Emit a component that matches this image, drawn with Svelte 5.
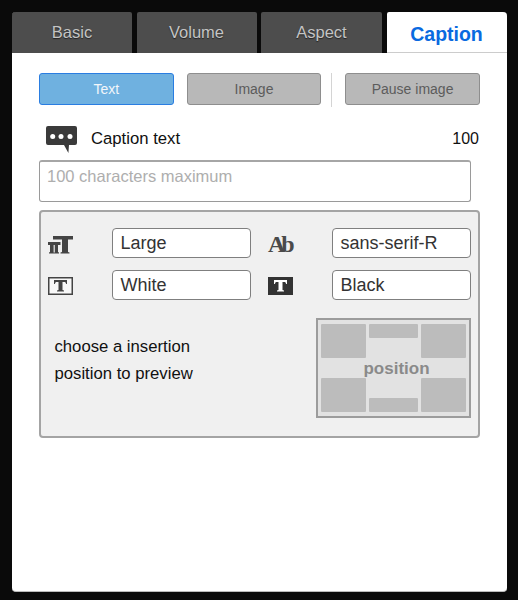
<script lang="ts">
	let tabs = ['Basic', 'Volume', 'Aspect', 'Caption'];
	let active = $state('Caption');
	let mode = $state('Text');
	let caption = $state('');
	let remaining = $derived(100 - caption.length);
</script>

<div class="panel">
	<div class="tabs">
		{#each tabs as tab}
			<button type="button" class="tab" class:active={active === tab} onclick={() => (active = tab)}>{tab}</button>
		{/each}
	</div>

	<div class="content">
		<div class="modes">
			<button type="button" class="mode" class:on={mode === 'Text'} onclick={() => (mode = 'Text')}>Text</button>
			<button type="button" class="mode" class:on={mode === 'Image'} onclick={() => (mode = 'Image')}>Image</button>
			<span class="divider"></span>
			<button type="button" class="mode pause">Pause image</button>
		</div>

		<div class="caption-row">
			<svg class="bubble" width="31" height="27" viewBox="0 0 31 27">
				<path
					fill="#3a3a3a"
					d="M2 0h27a2 2 0 0 1 2 2v15a2 2 0 0 1-2 2h-6l-.6 8-4.400-8H2a2 2 0 0 1-2-2V2a2 2 0 0 1 2-2z"
				/>
				<circle cx="6.700" cy="10.500" r="2.500" fill="#fff" />
				<circle cx="15" cy="10.500" r="2.500" fill="#fff" />
				<circle cx="24" cy="10.500" r="2.500" fill="#fff" />
			</svg>
			<span class="caption-label">Caption text</span>
			<span class="count">{remaining}</span>
		</div>

		<textarea class="caption-input" placeholder="100 characters maximum" maxlength="100" bind:value={caption}></textarea>

		<div class="settings">
			<div class="fields">
				<svg class="icon size" width="25" height="18" viewBox="0 0 25 18">
					<path fill="#444" d="M5 0h20v3.500h-5V16l1.500.5v1h-9v-1l1.500-.5V3.500H5z" />
					<path fill="#444" d="M0 6h12.500v3H10v7l1 .5v1H1v-1l1-.5V9H0z" />
					<rect x="5.500" y="9" width="1.500" height="7.500" fill="#c8c8c8" />
				</svg>
				<div class="field">Large</div>
				<span class="ab">Ab</span>
				<div class="field">sans-serif-R</div>

				<svg class="icon" width="25" height="18" viewBox="0 0 25 18">
					<rect x="0.750" y="0.750" width="23.500" height="16.500" fill="#f8f8f8" stroke="#444" stroke-width="1.500" />
					<path fill="#444" d="M6 3h13v4h-.8l-1-2h-2.700v8l1.500.6v.9H9v-.9l1.500-.6V5H7.800l-1 2H6z" />
				</svg>
				<div class="field">White</div>
				<svg class="icon" width="25" height="18" viewBox="0 0 25 18">
					<rect width="25" height="18" fill="#333" />
					<path fill="#fff" d="M6 3h13v4h-.8l-1-2h-2.700v8l1.500.6v.9H9v-.9l1.500-.6V5H7.800l-1 2H6z" />
				</svg>
				<div class="field">Black</div>
			</div>

			<div class="lower">
				<p class="hint">choose a insertion<br />position to preview</p>
				<div class="position">
					<span class="cell"></span>
					<span class="cell bar"></span>
					<span class="cell"></span>
					<span class="position-label">position</span>
					<span class="cell"></span>
					<span class="cell bar bottom"></span>
					<span class="cell"></span>
				</div>
			</div>
		</div>
	</div>
</div>

<style>
	:global(body) {
		background: #0a0a0a;
	}

	.panel {
		width: 495px;
		height: 580px;
		margin: 12px 0 0 12px;
		background: #fff;
		border-radius: 4px;
		border-bottom: 1px solid #bbb;
		box-sizing: border-box;
		font-family: 'Liberation Sans', Arial, sans-serif;
		color: #111;
		overflow: hidden;
	}

	.tabs {
		display: grid;
		grid-template-columns: 120px 120px 121px 120px;
		gap: 0 4.5px;
		height: 41px;
		background: #0a0a0a;
	}

	.tab {
		border: none;
		border-radius: 2px 2px 0 0;
		background: #4d4d4d;
		color: #c4c4c4;
		font: 16.500px 'Liberation Sans', Arial, sans-serif;
		padding: 0 0 1px;
		text-shadow: 0 1px 1px #222;
		cursor: pointer;
	}

	.tab.active {
		background: #fff;
		color: #0a6ae0;
		font-size: 19.500px;
		font-weight: 700;
		text-shadow: none;
		padding: 5px 0 0;
		border-bottom: 1px solid #ccc;
	}

	.content {
		padding: 20px 27px 0;
	}

	.modes {
		display: flex;
		align-items: flex-start;
		height: 34px;
	}

	.mode {
		width: 135px;
		height: 32px;
		box-sizing: border-box;
		border: 1px solid #8e8e8e;
		border-radius: 3px;
		background: #b8b8b8;
		color: #5c5c5c;
		font: 14px 'Liberation Sans', Arial, sans-serif;
		cursor: pointer;
	}

	.mode + .mode {
		margin-left: 13px;
		width: 134.500px;
	}

	.mode.pause {
		width: 135px;
	}

	.mode.on {
		background: #6fb1e0;
		border-color: #2a7de1;
		color: #f2f6fa;
	}

	.divider {
		width: 1px;
		height: 34px;
		background: #d4d4d4;
		margin: 0 13px 0 10px;
	}

	.caption-row {
		display: flex;
		align-items: center;
		height: 28px;
		margin-top: 18px;
		padding-left: 7px;
		font-size: 16px;
	}

	.bubble {
		flex-shrink: 0;
	}

	.caption-label {
		margin-left: 14px;
		font-size: 16.700px;
	}

	.count {
		margin-left: auto;
		padding-right: 1px;
	}

	.caption-input {
		display: block;
		width: 432px;
		height: 42px;
		margin-top: 7px;
		padding: 5px 7px;
		box-sizing: border-box;
		border: 1px solid #9a9a9a;
		border-top: 2px solid #a6a6a6;
		border-radius: 3px;
		font: 16.500px 'Liberation Sans', Arial, sans-serif;
		line-height: 18px;
		resize: none;
		outline: none;
	}

	.caption-input::placeholder {
		color: #aeaeae;
		opacity: 1;
	}

	.settings {
		width: 441px;
		height: 228px;
		margin-top: 8px;
		box-sizing: border-box;
		padding: 16px 7px 0;
		background: #f0f0f0;
		border: 2px solid #a4a4a4;
		border-radius: 4px;
	}

	.fields {
		display: grid;
		grid-template-columns: 64px 156px 64px 139px;
		grid-auto-rows: 30px;
		row-gap: 12px;
		align-items: center;
	}

	.icon {
		display: block;
		margin-top: 2px;
	}

	.icon.size {
		margin-top: 4px;
	}

	.field {
		width: 139px;
		height: 30px;
		box-sizing: border-box;
		padding-left: 7.500px;
		border: 1px solid #7f7f7f;
		border-radius: 4px;
		background: #fff;
		font-size: 18px;
		line-height: 29px;
		color: #333;
	}

	.ab {
		font: 700 24px 'Liberation Serif', serif;
		letter-spacing: -4px;
		color: #4a4a4a;
		line-height: 30px;
		margin-top: 1px;
	}

	.lower {
		display: flex;
		justify-content: space-between;
		margin-top: 18px;
	}

	.hint {
		margin: 16px 0 0 6.500px;
		font-size: 16.700px;
		line-height: 26.500px;
	}

	.position {
		display: grid;
		grid-template-columns: 45px 49px 45px;
		grid-template-rows: 34px 20px 34px;
		gap: 0 3px;
		width: 155px;
		height: 100px;
		box-sizing: border-box;
		padding: 4px 3px;
		background: #e2e2e2;
		border: 2px solid #9c9c9c;
	}

	.cell {
		background: #bcbcbc;
		border-radius: 1px;
	}

	.bar {
		height: 14px;
	}

	.bar.bottom {
		align-self: end;
	}

	.position-label {
		grid-column: 1 / -1;
		padding-left: 6px;
		text-align: center;
		font-size: 17px;
		font-weight: 700;
		line-height: 22px;
		color: #8a8a8a;
	}
</style>
